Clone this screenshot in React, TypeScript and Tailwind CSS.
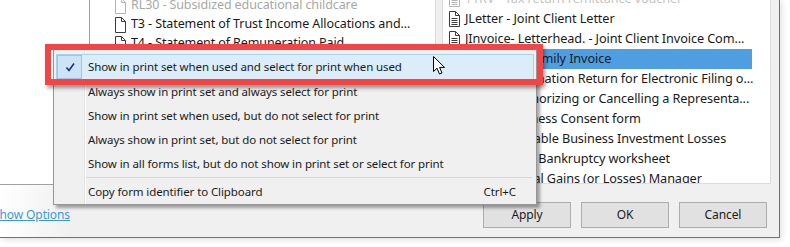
import React from 'react';

function PageIcon({ lines = false, faded = false }: { lines?: boolean; faded?: boolean }) {
  const c = faded ? '#b4b4b4' : '#3c3c3c';
  return (
    <svg width="12" height="16" viewBox="0 0 12 16" className="shrink-0">
      <path d="M1.5 0.5H7.5L11.5 4.5V15.5H1.5Z" fill="#fff" stroke={c} />
      <path d="M7.5 0.5V4.5H11.5" fill="none" stroke={c} />
      {lines && (
        <path d="M3.5 7.5H9.5M3.5 9.5H9.5M3.5 11.5H9.5M3.5 13.5H9.5" stroke={c} />
      )}
    </svg>
  );
}

const leftRows = [
  { text: 'RL30 - Subsidized educational childcare', faded: true },
  { text: 'T3 - Statement of Trust Income Allocations and...', faded: false },
  { text: 'T4 - Statement of Remuneration Paid', faded: false },
];

const rightRows = [
  { text: 'T1RV - Tax return remittance voucher', faded: true },
  { text: 'JLetter - Joint Client Letter' },
  { text: 'JInvoice- Letterhead. - Joint Client Invoice Com...' },
  { text: 'JInvoice2 - Family Invoice', selected: true },
  { text: 'T183 - Information Return for Electronic Filing o...' },
  { text: 'T1013 - Authorizing or Cancelling a Representa...' },
  { text: 'RC59 - Business Consent form' },
  { text: 'ABIL - Allowable Business Investment Losses' },
  { text: 'T1 BKT - Pre Bankruptcy worksheet' },
  { text: 'Sch3 - Capital Gains (or Losses) Manager' },
];

const menuItems = [
  'Always show in print set and always select for print',
  'Show in print set when used, but do not select for print',
  'Always show in print set, but do not select for print',
  'Show in all forms list, but do not show in print set or select for print',
];

export default function App() {
  return (
    <div className="relative w-[790px] h-[247px] overflow-hidden bg-white font-['Noto_Sans',sans-serif] text-[11.5px] tracking-[-0.1px] text-[#1a1a1a]">
      {/* dialog window */}
      <div className="w-[780px] h-[238px] bg-[#f0f0f0] border-r border-b border-[#1a86dd] shadow-[2px_2px_6px_rgba(0,0,0,0.12)] flex flex-col">
        <div className="flex h-[185px]">
          {/* left forms list */}
          <div className="w-[436px] h-[185px] bg-white border-b border-r border-b-[#a0a0a0] border-r-[#dadada] flex overflow-hidden text-[12.5px]">
            <div className="w-[90px] shrink-0 border-r border-[#a0a0a0]" />
            <div className="flex flex-col pl-[24px] -mt-[4px]">
              {leftRows.map((r) => (
                <div key={r.text} className="h-[19px] flex items-center gap-[5px] whitespace-nowrap">
                  <PageIcon faded={r.faded} />
                  <span className={r.faded ? 'text-[#a8a8a8]' : 'text-[#1a1a1a]'}>{r.text}</span>
                </div>
              ))}
            </div>
          </div>
          <div className="w-[6px] shrink-0" />
          {/* right print set list */}
          <div className="w-[329px] h-[184px] shrink-0 bg-white border-l border-r border-b border-[#dcdcdc] overflow-hidden text-[12.7px]">
            <div className="flex flex-col -mt-[11px]">
              {rightRows.map((r) => (
                <div
                  key={r.text}
                  className={`h-[20px] flex items-center gap-[5px] pl-[5px] mr-[18px] whitespace-nowrap ${r.selected ? 'bg-[#4d9fe1]' : ''}`}
                >
                  <PageIcon lines faded={r.faded} />
                  <span className={r.faded ? 'text-[#c4c4c4]' : 'text-[#1a1a1a]'}>{r.text}</span>
                </div>
              ))}
            </div>
          </div>
        </div>
        {/* bottom bar */}
        <div className="relative flex-1 flex items-start justify-between pt-[17px] bg-[linear-gradient(to_right,#ffffff_0px,#f0f0f0_70px)]">
          <span className="h-[26px] flex items-center -ml-[7px] text-[#3a98de] underline text-[12px]">Show Options</span>
          <div className="flex gap-[10px] mr-[12px] text-[12px]">
            {['Apply', 'OK', 'Cancel'].map((b) => (
              <div key={b} className="w-[88px] h-[26px] bg-[#e1e1e1] border border-[#adadad] flex items-center justify-center">
                {b}
              </div>
            ))}
          </div>
        </div>
      </div>

      {/* context menu */}
      <div className="absolute left-[53px] top-[48px] w-[484px] h-[157px] bg-[#f0f0f0] border border-[#979797] shadow-[3px_3px_3px_rgba(0,0,0,0.35)]">
        <div className="absolute left-[30px] top-0 bottom-0 w-[2px] border-l border-[#e2e3e3] border-r border-r-white" />
        <div className="relative flex flex-col pt-[5px] px-[2px]">
          <div className="h-[26px] flex items-center bg-[#dbedf9] border border-[#a6d4f0]">
            <div className="w-[25px] h-[24px] bg-[#cde4f6] border border-[#9cc7e8] flex items-center justify-center">
              <svg width="10" height="10" viewBox="0 0 10 10">
                <path d="M1.5 5.5L4 8.5L9 1.5" fill="none" stroke="#1f2b86" strokeWidth="1.6" />
              </svg>
            </div>
            <span className="ml-[6px]">Show in print set when used and select for print when used</span>
          </div>
          {menuItems.map((m) => (
            <div key={m} className="h-[24px] flex items-center pl-[32px] whitespace-nowrap">
              {m}
            </div>
          ))}
          <div className="h-[4px] pt-[1px] pl-[30px] pr-[2px]">
            <div className="h-px bg-[#d7d7d7]" />
          </div>
          <div className="h-[24px] flex items-center justify-between pl-[32px] pr-[18px]">
            <span>Copy form identifier to Clipboard</span>
            <span>Ctrl+C</span>
          </div>
        </div>
      </div>

      {/* callout box */}
      <div className="absolute left-[45px] top-[44px] w-[498px] h-[41px] border-[6px] border-[#f24646] shadow-[2px_3px_4px_rgba(0,0,0,0.4)]" />

      {/* mouse pointer */}
      <svg className="absolute left-[433px] top-[56px]" width="13" height="19" viewBox="0 0 13 19">
        <path d="M0.5 0.5V15.5L4 12.2L6.5 18L9 17L6.6 11.4H11.5Z" fill="#fff" stroke="#000" strokeLinejoin="round" />
      </svg>
    </div>
  );
}
